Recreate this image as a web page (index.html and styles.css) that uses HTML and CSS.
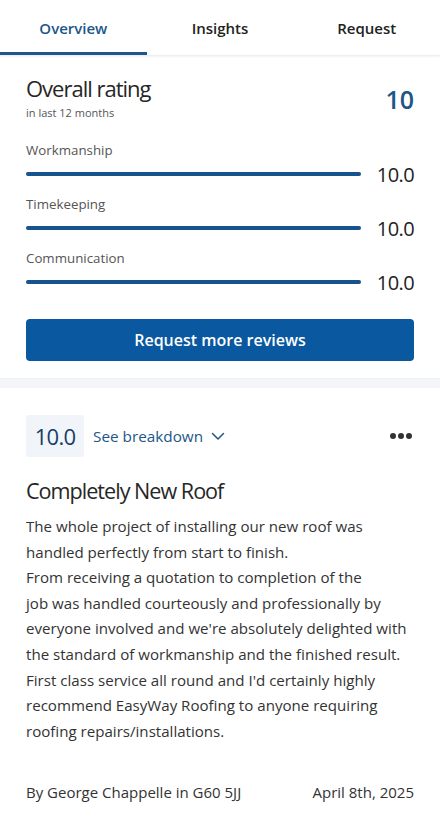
FILE: index.html
```html
<!DOCTYPE html>
<html lang="en">
<head>
<meta charset="utf-8">
<title>Reviews</title>
<link rel="stylesheet" href="styles.css">
</head>
<body>
<nav class="tabs">
  <div class="tab active">Overview</div>
  <div class="tab">Insights</div>
  <div class="tab">Request</div>
</nav>
<section class="summary">
  <div class="overall">
    <div>
      <h1 class="overall-title">Overall rating</h1>
      <div class="overall-sub">in last 12 months</div>
    </div>
    <div class="overall-score">10</div>
  </div>
  <div class="metrics">
    <div class="metric">
      <div class="metric-label">Workmanship</div>
      <div class="metric-row">
        <div class="bar"><div class="bar-fill" style="width:100%"></div></div>
        <div class="metric-value">10.0</div>
      </div>
    </div>
    <div class="metric">
      <div class="metric-label">Timekeeping</div>
      <div class="metric-row">
        <div class="bar"><div class="bar-fill" style="width:100%"></div></div>
        <div class="metric-value">10.0</div>
      </div>
    </div>
    <div class="metric">
      <div class="metric-label">Communication</div>
      <div class="metric-row">
        <div class="bar"><div class="bar-fill" style="width:100%"></div></div>
        <div class="metric-value">10.0</div>
      </div>
    </div>
  </div>
  <button class="btn-primary">Request more reviews</button>
</section>
<div class="divider"></div>
<article class="review">
  <div class="review-head">
    <div class="score-box">10.0</div>
    <div class="breakdown">See breakdown
      <svg class="chev" width="14" height="9" viewBox="0 0 14 9"><path d="M1.5 1.5 L7 7 L12.5 1.5" fill="none" stroke="#1d5687" stroke-width="1.5" stroke-linecap="round" stroke-linejoin="round"/></svg>
    </div>
    <div class="more"><span></span><span></span><span></span></div>
  </div>
  <h2 class="review-title">Completely New Roof</h2>
  <p class="review-body">The whole project of installing our new roof was handled perfectly from start to finish.<br>From receiving a quotation to completion of the<br>job was handled courteously and professionally by everyone involved and we're absolutely delighted with the standard of workmanship and the finished result. First class service all round and I'd certainly highly recommend EasyWay Roofing to anyone requiring roofing repairs/installations.</p>
  <div class="review-foot">
    <span>By George Chappelle in G60 5JJ</span>
    <span>April 8th, 2025</span>
  </div>
</article>
</body>
</html>
```
FILE: styles.css
```css
* { box-sizing: border-box; }
html, body { margin: 0; padding: 0; background: #fff; }
body {
  font-family: "Open Sans", "Noto Sans", sans-serif;
  color: #2b2b2b;
  width: 440px;
}
.tabs {
  display: flex;
  height: 56px;
  border-bottom: 1px solid #eceef0;
  box-shadow: 0 1px 2px rgba(0,0,0,0.05);
}
.tab {
  flex: 1;
  display: flex;
  align-items: center;
  justify-content: center;
  font-size: 15px;
  font-weight: 600;
  color: #222;
  padding-top: 4px;
  border-bottom: 3px solid transparent;
}
.tab.active {
  color: #1d5687;
  border-bottom-color: #1d5687;
}
.summary {
  padding: 18px 26px 17px;
}
.overall {
  display: flex;
  justify-content: space-between;
  align-items: flex-start;
}
.overall-title {
  margin: 0;
  font-size: 22px;
  line-height: 28px;
  font-weight: 500;
  letter-spacing: -1px;
  color: #262626;
}
.overall-sub {
  font-size: 11px;
  line-height: 16px;
  color: #555;
  margin-top: 3px;
}
.overall-score {
  font-size: 25px;
  font-weight: 600;
  color: #1d5687;
  line-height: 30px;
  margin-top: 10px;
}
.metrics {
  margin-top: 20px;
  display: flex;
  flex-direction: column;
  gap: 6px;
}
.metric-label {
  font-size: 13.3px;
  line-height: 18px;
  color: #555;
}
.metric-row {
  display: flex;
  align-items: center;
  gap: 16px;
  height: 30px;
}
.bar {
  flex: 1;
  height: 4px;
  border-radius: 2px;
  background: #d9e3ee;
}
.bar-fill {
  height: 100%;
  border-radius: 2px;
  background: #17538d;
}
.metric-value {
  font-size: 20px;
  letter-spacing: -0.6px;
  color: #222;
  line-height: 28px;
  padding-top: 1px;
}
.btn-primary {
  display: block;
  width: 100%;
  height: 42px;
  margin-top: 22px;
  border: none;
  border-radius: 4px;
  background: #0a58a0;
  color: #fff;
  font-family: inherit;
  font-size: 16px;
  font-weight: 600;
}
.divider {
  height: 10px;
  background: #f3f5f8;
  border-top: 1px solid #eef0f3;
}
.review {
  padding: 27px 26px 0;
}
.review-head {
  display: flex;
  align-items: center;
}
.score-box {
  width: 58px;
  height: 42px;
  background: #f1f5f9;
  border-radius: 2px;
  display: flex;
  align-items: center;
  justify-content: center;
  font-size: 22px;
  letter-spacing: -0.7px;
  color: #153e68;
}
.breakdown {
  margin-left: 9px;
  font-size: 15.3px;
  font-weight: 500;
  color: #1d5687;
  display: flex;
  align-items: center;
  gap: 8px;
}
.chev { margin-top: 1px; }
.more {
  margin-left: auto;
  display: flex;
  gap: 2px;
  margin-right: 2px;
}
.more span {
  width: 6px;
  height: 6px;
  border-radius: 50%;
  background: #333;
}
.review-title {
  margin: 20px 0 0;
  font-size: 21.6px;
  line-height: 28px;
  font-weight: 500;
  letter-spacing: -1px;
  color: #262626;
}
.review-body {
  margin: 9px 0 0;
  font-size: 15.1px;
  line-height: 25.6px;
  color: #333;
}
.review-foot {
  display: flex;
  justify-content: space-between;
  margin-top: 38px;
  font-size: 15px;
  line-height: 20px;
  color: #333;
}
```
